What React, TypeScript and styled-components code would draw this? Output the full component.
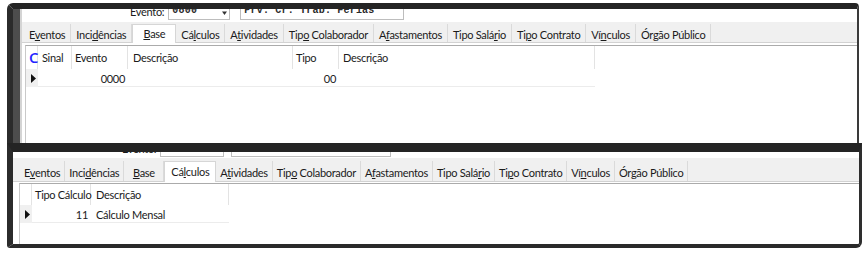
import React from "react";
import styled, { createGlobalStyle, css } from "styled-components";

const Global = createGlobalStyle`
  html, body { margin: 0; padding: 0; background: #ffffff; }
  body {
    width: 865px; height: 256px; overflow: hidden;
    font-family: Lato, "Noto Sans", sans-serif;
    font-size: 11px; letter-spacing: -0.3px; color: #1b1b1b;
  }
`;

const Page = styled.div`
  box-sizing: border-box;
  width: 865px;
  padding: 3px 3px 0 7px;
  display: flex;
  flex-direction: column;
`;

const TopWindow = styled.section`
  box-sizing: border-box;
  width: 852px;
  height: 140px;
  border-top: 6px solid #242424;
  border-left: 6px solid #2b2b2b;
  border-right: 2px solid #3a3a3a;
  border-radius: 6px 4px 0 0;
  overflow: hidden;
  display: flex;
`;

const InnerFrame = styled.div`
  flex: 1;
  display: flex;
  border-left: 7px solid #4d4d4d;
`;

const Content = styled.div<{ $edge?: boolean }>`
  flex: 1;
  min-width: 0;
  display: flex;
  flex-direction: column;
  background: #ffffff;
  ${(p) => p.$edge && css`border-left: 2px solid #d4d4d4;`}
`;

const BottomWindow = styled.section`
  box-sizing: border-box;
  width: 855px;
  height: 105px;
  border-top: 9px solid #242424;
  border-left: 6px solid #2b2b2b;
  border-right: 3px solid #2e2e2e;
  border-bottom: 4px solid #2a2a2a;
  border-radius: 0 0 6px 3px;
  overflow: hidden;
  display: flex;
`;

const FormRow = styled.div<{ $h: number; $left: number; $pb: number }>`
  height: ${(p) => p.$h}px;
  flex: none;
  overflow: hidden;
  display: flex;
  align-items: flex-end;
  box-sizing: border-box;
  padding-left: ${(p) => p.$left}px;
  padding-bottom: ${(p) => p.$pb}px;
`;

const Label = styled.span`
  line-height: 14px;
  margin-right: 4px;
  margin-bottom: 1px;
  color: #1b1b1b;
`;

const Field = styled.div<{ $w: number; $gap?: number }>`
  box-sizing: border-box;
  width: ${(p) => p.$w}px;
  height: 20px;
  margin-left: ${(p) => p.$gap ?? 0}px;
  border: 1px solid #bdbdbd;
  background: #fff;
  display: flex;
  align-items: center;
  padding: 0 2px 0 3px;
  font-family: "Liberation Mono", monospace;
  font-weight: bold;
  font-size: 10px;
  letter-spacing: 0.2px;
  color: #2a2a2a;
`;

const FieldText = styled.span`
  flex: 1;
  white-space: nowrap;
`;

const TabStrip = styled.div<{ $h: number; $left: number }>`
  flex: none;
  height: ${(p) => p.$h}px;
  background: #f0f0f0;
  border-bottom: 1px solid #d2d2d2;
  display: flex;
  align-items: flex-end;
  padding-left: ${(p) => p.$left}px;
`;

const Tab = styled.div<{ $active?: boolean; $h: number; $pad: number }>`
  box-sizing: border-box;
  height: ${(p) => p.$h}px;
  min-width: 40px;
  padding: 2px ${(p) => p.$pad}px 0;
  display: flex;
  align-items: center;
  justify-content: center;
  white-space: nowrap;
  border-right: 1px solid #dadada;
  color: #1b1b1b;
  ${(p) =>
    p.$active &&
    css`
      background: #ffffff;
      min-width: 44px;
      padding: 0 ${p.$pad + 2}px 2px;
      height: ${p.$h + 1}px;
      margin-bottom: -1px;
      border: 1px solid #d6d6d6;
      border-bottom: none;
    `}
`;

const TabText = styled.span`
  white-space: pre;
`;

const Key = styled.span`
  text-decoration: underline;
  text-underline-offset: 1px;
`;

const GridBox = styled.div<{ $mt: number; $ml: number }>`
  flex: 1;
  margin: ${(p) => p.$mt}px 0 0 ${(p) => p.$ml}px;
  border-top: 1px solid #ababab;
  border-left: 1px solid #c9c9c9;
  background: #ffffff;
`;

const Grid = styled.div<{ $cols: string }>`
  display: grid;
  grid-template-columns: ${(p) => p.$cols};
  width: max-content;
`;

const HeadCell = styled.div<{ $h: number; $pl?: number }>`
  box-sizing: border-box;
  height: ${(p) => p.$h}px;
  padding: 0 4px 0 ${(p) => p.$pl ?? 4}px;
  display: flex;
  align-items: center;
  white-space: nowrap;
  border-right: 1px solid #e3e3e3;
  color: #1b1b1b;
`;

const Marker = styled.span`
  font-family: "Open Sans", "Noto Sans", sans-serif;
  font-size: 15px;
  font-weight: 600;
  color: #2323ff;
  line-height: 1;
  margin-left: -1px;
`;

const IndicatorCell = styled.div`
  box-sizing: border-box;
  height: 18px;
  background: #f0f0f0;
  display: flex;
  align-items: center;
  padding-left: 5px;
`;

const Cell = styled.div<{ $right?: boolean }>`
  box-sizing: border-box;
  height: 18px;
  padding: 1px 3px 0 5px;
  display: flex;
  align-items: center;
  justify-content: ${(p) => (p.$right ? "flex-end" : "flex-start")};
  white-space: nowrap;
  border-bottom: 1px solid #ececec;
  color: #1b1b1b;
`;

type TabDef = { label: string; key: number };

const TABS: TabDef[] = [
  { label: "Eventos", key: 1 },
  { label: "Incidências", key: 4 },
  { label: "Base", key: 0 },
  { label: "Cálculos", key: 2 },
  { label: "Atividades", key: 1 },
  { label: "Tipo Colaborador", key: 3 },
  { label: "Afastamentos", key: 1 },
  { label: "Tipo Salário", key: 9 },
  { label: "Tipo Contrato", key: 2 },
  { label: "Vínculos", key: 2 },
  { label: "Órgão Público", key: 2 },
];

const TabLabel = ({ t }: { t: TabDef }) => (
  <TabText>
    {t.label.slice(0, t.key)}
    <Key>{t.label[t.key]}</Key>
    {t.label.slice(t.key + 1)}
  </TabText>
);

type TabsProps = { active: string; h: number; stripH: number; left: number; pad: number };

const Tabs = ({ active, h, stripH, left, pad }: TabsProps) => (
  <TabStrip $h={stripH} $left={left}>
    {TABS.map((t) => (
      <Tab key={t.label} $h={h} $pad={pad} $active={t.label === active}>
        <TabLabel t={t} />
      </Tab>
    ))}
  </TabStrip>
);

const Spinner = () => (
  <svg width="5" height="10" viewBox="0 0 5 10">
    <polygon points="2.5,0 5,3.5 0,3.5" fill="#333" />
    <polygon points="0,6.5 5,6.5 2.5,10" fill="#333" />
  </svg>
);

const RowArrow = () => (
  <svg width="5" height="9" viewBox="0 0 5 9">
    <polygon points="0,0 5,4.5 0,9" fill="#111" />
  </svg>
);

const EventoFields = ({ w1, gap, w2 }: { w1: number; gap: number; w2: number }) => (
  <>
    <Label>Evento:</Label>
    <Field $w={w1}>
      <FieldText>0800</FieldText>
      <Spinner />
    </Field>
    <Field $w={w2} $gap={gap}>
      <FieldText>Prv. Cr. Trab. Férias</FieldText>
    </Field>
  </>
);

export default function App() {
  return (
    <>
      <Global />
      <Page>
        <TopWindow>
          <InnerFrame>
            <Content $edge>
              <FormRow $h={13} $left={108} $pb={2}>
                <EventoFields w1={62} gap={10} w2={164} />
              </FormRow>
              <Tabs active="Base" h={18} stripH={20} left={2} pad={5} />
              <GridBox $mt={2} $ml={3}>
                <Grid $cols="12px 34px 56px 165px 46px 256px">
                  <HeadCell $h={23}>
                    <Marker>C</Marker>
                  </HeadCell>
                  <HeadCell $h={23}>Sinal</HeadCell>
                  <HeadCell $h={23} $pl={3}>Evento</HeadCell>
                  <HeadCell $h={23} $pl={5}>Descrição</HeadCell>
                  <HeadCell $h={23} $pl={3}>Tipo</HeadCell>
                  <HeadCell $h={23}>Descrição</HeadCell>
                  <IndicatorCell>
                    <RowArrow />
                  </IndicatorCell>
                  <Cell />
                  <Cell $right>0000</Cell>
                  <Cell />
                  <Cell $right>00</Cell>
                  <Cell />
                </Grid>
              </GridBox>
            </Content>
          </InnerFrame>
        </TopWindow>
        <BottomWindow>
          <Content>
            <FormRow $h={6} $left={109} $pb={1}>
              <EventoFields w1={64} gap={7} w2={160} />
            </FormRow>
            <Tabs active="Cálculos" h={20} stripH={23} left={7} pad={4} />
            <GridBox $mt={1} $ml={6}>
              <Grid $cols="12px 59px 138px">
                <HeadCell $h={21} />
                <HeadCell $h={21} $pl={3}>Tipo Cálculo</HeadCell>
                <HeadCell $h={21} $pl={5}>Descrição</HeadCell>
                <IndicatorCell>
                  <RowArrow />
                </IndicatorCell>
                <Cell $right>11</Cell>
                <Cell>Cálculo Mensal</Cell>
              </Grid>
            </GridBox>
          </Content>
        </BottomWindow>
      </Page>
    </>
  );
}
